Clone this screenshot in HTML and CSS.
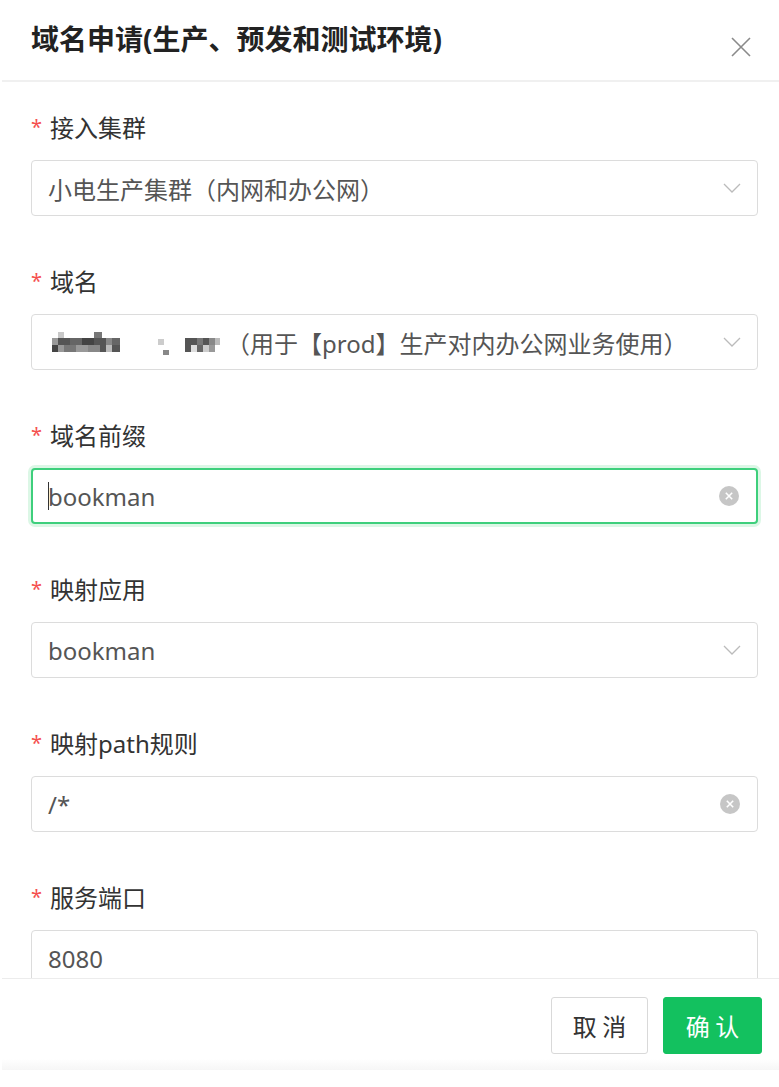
FILE: index.html
```html
<!DOCTYPE html>
<html lang="zh-CN">
<head>
  <meta charset="UTF-8">
  <title>域名申请</title>
  <link rel="stylesheet" href="styles.css">
</head>
<body>
  <div class="dialog">
    <div class="dialog-header">
      <h1 class="dialog-title">域名申请(生产、预发和测试环境)</h1>
      <span class="dialog-close">
        <svg width="22" height="22" viewBox="0 0 22 22"><path d="M2 2L20 20M20 2L2 20" stroke="#8a8a8a" stroke-width="1.6" fill="none"/></svg>
      </span>
    </div>

    <div class="dialog-body">
      <div class="form-item">
        <label class="form-label"><span class="req">*</span>接入集群</label>
        <div class="field">
          <span class="field-value">小电生产集群（内网和办公网）</span>
          <svg class="chevron" width="18" height="10" viewBox="0 0 18 10"><path d="M1 1L9 9L17 1" stroke="#bbb" stroke-width="1.3" fill="none"/></svg>
        </div>
      </div>

      <div class="form-item">
        <label class="form-label"><span class="req">*</span>域名</label>
        <div class="field">
          <span class="field-value">
            <svg class="mosaic" width="178" height="28" viewBox="0 0 178 28">
              <rect x="10" y="4" width="6" height="6" fill="#c8c8c8"/>
              <rect x="46" y="4" width="8" height="6" fill="#777"/>
              <rect x="4" y="10" width="6" height="7" fill="#999"/>
              <rect x="10" y="10" width="12" height="7" fill="#555"/>
              <rect x="22" y="10" width="12" height="7" fill="#666"/>
              <rect x="34" y="10" width="12" height="7" fill="#444"/>
              <rect x="46" y="10" width="12" height="7" fill="#555"/>
              <rect x="58" y="10" width="6" height="7" fill="#888"/>
              <rect x="64" y="10" width="8" height="7" fill="#666"/>
              <rect x="4" y="17" width="6" height="7" fill="#444"/>
              <rect x="10" y="17" width="6" height="7" fill="#999"/>
              <rect x="16" y="17" width="12" height="7" fill="#777"/>
              <rect x="28" y="17" width="12" height="7" fill="#999"/>
              <rect x="40" y="17" width="12" height="7" fill="#888"/>
              <rect x="52" y="17" width="6" height="7" fill="#555"/>
              <rect x="58" y="17" width="6" height="7" fill="#bbb"/>
              <rect x="64" y="17" width="8" height="7" fill="#555"/>
              <rect x="110" y="11" width="6" height="6" fill="#ccc"/>
              <rect x="115" y="22" width="6" height="5" fill="#888"/>
              <rect x="137" y="10" width="12" height="7" fill="#555"/>
              <rect x="149" y="10" width="6" height="7" fill="#777"/>
              <rect x="155" y="10" width="6" height="7" fill="#555"/>
              <rect x="161" y="10" width="6" height="7" fill="#888"/>
              <rect x="167" y="10" width="5" height="7" fill="#bbb"/>
              <rect x="137" y="17" width="6" height="7" fill="#555"/>
              <rect x="143" y="17" width="6" height="7" fill="#ddd"/>
              <rect x="149" y="17" width="6" height="7" fill="#666"/>
              <rect x="155" y="17" width="6" height="7" fill="#ccc"/>
              <rect x="161" y="17" width="6" height="7" fill="#999"/>
            </svg>（用于【prod】生产对内办公网业务使用）
          </span>
          <svg class="chevron" width="18" height="10" viewBox="0 0 18 10"><path d="M1 1L9 9L17 1" stroke="#bbb" stroke-width="1.3" fill="none"/></svg>
        </div>
      </div>

      <div class="form-item">
        <label class="form-label"><span class="req">*</span>域名前缀</label>
        <div class="field field-focus">
          <span class="field-value"><span class="caret"></span>bookman</span>
          <span class="clear-icon">
            <svg width="20" height="20" viewBox="0 0 20 20"><circle cx="10" cy="10" r="10" fill="#c6c6c6"/><path d="M6.8 6.8L13.2 13.2M13.2 6.8L6.8 13.2" stroke="#fff" stroke-width="1.6"/></svg>
          </span>
        </div>
      </div>

      <div class="form-item">
        <label class="form-label"><span class="req">*</span>映射应用</label>
        <div class="field">
          <span class="field-value">bookman</span>
          <svg class="chevron" width="18" height="10" viewBox="0 0 18 10"><path d="M1 1L9 9L17 1" stroke="#bbb" stroke-width="1.3" fill="none"/></svg>
        </div>
      </div>

      <div class="form-item">
        <label class="form-label"><span class="req">*</span>映射path规则</label>
        <div class="field">
          <span class="field-value">/*</span>
          <span class="clear-icon">
            <svg width="20" height="20" viewBox="0 0 20 20"><circle cx="10" cy="10" r="10" fill="#c6c6c6"/><path d="M6.8 6.8L13.2 13.2M13.2 6.8L6.8 13.2" stroke="#fff" stroke-width="1.6"/></svg>
          </span>
        </div>
      </div>

      <div class="form-item">
        <label class="form-label"><span class="req">*</span>服务端口</label>
        <div class="field">
          <span class="field-value">8080</span>
        </div>
      </div>
    </div>

    <div class="dialog-footer">
      <button class="btn btn-default">取 消</button>
      <button class="btn btn-primary">确 认</button>
    </div>
    <div class="dialog-edge"></div>
  </div>
</body>
</html>
```

FILE: styles.css
```css
* {
  margin: 0;
  padding: 0;
  box-sizing: border-box;
}

body {
  background-color: #fff;
  font-family: "Noto Sans", "Noto Sans CJK SC", sans-serif;
  color: #333;
}

.dialog {
  width: 777px;
  margin-left: 2px;
  background-color: #fff;
}

.dialog-header {
  height: 82px;
  display: flex;
  align-items: center;
  justify-content: space-between;
  padding: 0 27px 0 29px;
  border-bottom: 2px solid #f0f0f0;
}

.dialog-title {
  font-size: 28px;
  font-weight: bold;
  color: #222;
  line-height: 36px;
  margin-top: -2px;
}

.dialog-close {
  display: flex;
  margin-top: 14px;
}

.dialog-body {
  height: 896px;
  overflow: hidden;
  padding: 29px 21px 0 29px;
}

.form-item {
  margin-bottom: 49px;
}

.form-label {
  display: flex;
  align-items: center;
  height: 32px;
  padding-bottom: 2px;
  font-size: 24px;
  color: #333;
  margin-bottom: 17px;
}

.req {
  color: #f5504f;
  font-size: 20px;
  width: 19px;
}

.field {
  height: 56px;
  display: flex;
  align-items: center;
  justify-content: space-between;
  border: 1px solid #dcdcdc;
  border-radius: 4px;
  padding: 0 16px 0 16px;
  background-color: #fff;
}

.field-focus {
  border: 2px solid #3ecf7c;
  box-shadow: 0 0 0 3px #dcf7e6;
  padding-left: 15px;
}

.field-value {
  font-size: 24px;
  color: #555;
  display: flex;
  align-items: center;
  white-space: nowrap;
}

.mosaic {
  display: block;
}

.caret {
  display: inline-block;
  width: 1px;
  height: 28px;
  background-color: #333;
  margin-right: -1px;
}

.clear-icon {
  display: flex;
  margin-right: 1px;
}

.dialog-footer {
  display: flex;
  justify-content: flex-end;
  gap: 15px;
  padding: 18px 17px 5px 0;
  border-top: 1px solid #ececec;
}

.btn {
  height: 57px;
  font-family: "Noto Sans CJK SC", sans-serif;
  font-size: 24px;
  border-radius: 3px;
  cursor: pointer;
}

.btn-default {
  width: 97px;
  background-color: #fff;
  border: 1px solid #d9d9d9;
  color: #333;
}

.btn-primary {
  width: 99px;
  background-color: #13c15f;
  border: 1px solid #13c15f;
  color: #fff;
}

.dialog-edge {
  height: 11px;
  background: linear-gradient(#fff, #f6f6f6);
}
```
